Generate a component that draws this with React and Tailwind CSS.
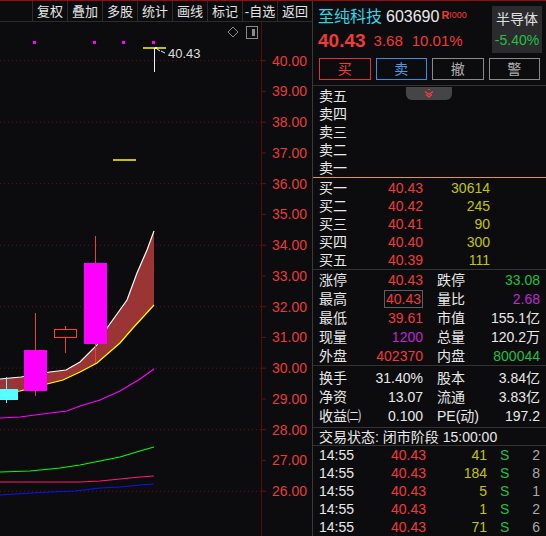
import React from "react";

const tools = ["复权", "叠加", "多股", "统计", "画线", "标记", "-自选", "返回"];

const axisPrices = [40, 39, 38, 37, 36, 35, 34, 33, 32, 31, 30, 29, 28, 27, 26];
const priceY = (p) => 60.7 + (40 - p) * 30.75;

const asks = ["卖五", "卖四", "卖三", "卖二", "卖一"];
const bids = [
  ["买一", "40.43", "30614"],
  ["买二", "40.42", "245"],
  ["买三", "40.41", "90"],
  ["买四", "40.40", "300"],
  ["买五", "40.39", "111"],
];

const stats1 = [
  ["涨停", "40.43", "text-[#f03a3a]", "跌停", "33.08", "text-[#1fc044]"],
  ["最高", "40.43", "text-[#f03a3a]", "量比", "2.68", "text-[#c026d3]"],
  ["最低", "39.61", "text-[#f03a3a]", "市值", "155.1亿", "text-[#e8e8e8]"],
  ["现量", "1200", "text-[#c026d3]", "总量", "120.2万", "text-[#e8e8e8]"],
  ["外盘", "402370", "text-[#f03a3a]", "内盘", "800044", "text-[#1fc044]"],
];

const stats2 = [
  ["换手", "31.40%", "股本", "3.84亿"],
  ["净资", "13.07", "流通", "3.83亿"],
  ["收益㈡", "0.100", "PE(动)", "197.2"],
];

const trades = [
  ["14:55", "40.43", "41", "2"],
  ["14:55", "40.43", "184", "8"],
  ["14:55", "40.43", "5", "1"],
  ["14:55", "40.43", "1", "2"],
  ["14:55", "40.43", "71", "6"],
];

const pts = (arr) => arr.map((p) => p.join(",")).join(" ");

const upper = [[0, 379], [21, 377], [50, 372], [66, 370], [80, 362], [97, 345], [107, 328], [127, 300], [137, 273], [147, 250], [154, 231]];
const lower = [[0, 394], [20, 391], [47, 384], [63, 380], [80, 372], [97, 363], [120, 343], [133, 328], [144, 316], [154, 305]];

function KChart() {
  return (
    <svg width="312" height="514" viewBox="0 22 312 514" className="block">
      {[40, 38, 36, 34, 32, 30, 28, 26].map((p) => (
        <line key={p} x1="0" x2="261" y1={priceY(p)} y2={priceY(p)} stroke="#6b1010" strokeDasharray="1 3" />
      ))}
      <line x1="261.5" x2="261.5" y1="22" y2="536" stroke="#5a0a0a" />
      {axisPrices.map((p) => (
        <g key={p}>
          <line x1="262" x2="266" y1={priceY(p)} y2={priceY(p)} stroke="#6b1010" />
          <text x="307" y={priceY(p) + 5} textAnchor="end" fontSize="14" fill="#e63c3c" fontFamily="Liberation Sans, sans-serif">
            {p.toFixed(2)}
          </text>
        </g>
      ))}

      {/* icons */}
      <path d="M233 27 L238 32 L233 37 L228 32 Z" fill="none" stroke="#8a8a8a" />
      <rect x="246.5" y="26.5" width="11" height="12" fill="none" stroke="#8a8a8a" />
      <rect x="252" y="29" width="3" height="7" fill="#8a8a8a" />

      {/* top markers */}
      {[34, 94, 123, 153].map((x) => (
        <rect key={x} x={x - 1} y="41" width="3" height="3" fill="#ff00ff" />
      ))}
      <line x1="143" x2="166" y1="48" y2="48" stroke="#ffff00" strokeWidth="1.5" />
      <line x1="154.5" x2="154.5" y1="48" y2="72" stroke="#f0f0f0" />
      <rect x="155" y="47" width="2" height="2" fill="#ffff60" />
      <path d="M157 49 L160 51 M161 51 L165 53" stroke="#f0f0f0" />
      <text x="168" y="58" fontSize="13" fill="#dcdcdc" fontFamily="Liberation Sans, sans-serif">40.43</text>
      <line x1="113" x2="136" y1="160" y2="160" stroke="#ffff00" strokeWidth="1.5" />

      {/* band */}
      <polygon points={pts([...upper, ...[...lower].reverse()])} fill="#9b3535" />
      <polyline points={pts(upper)} fill="none" stroke="#ffffff" strokeWidth="1.2" />
      <polyline points={pts(lower)} fill="none" stroke="#ffff00" strokeWidth="1.2" />

      {/* moving averages */}
      <polyline points={pts([[0, 418], [20, 417], [50, 413], [67, 411], [80, 406], [100, 400], [120, 391], [140, 379], [154, 369]])} fill="none" stroke="#ff00ff" strokeWidth="1.2" />
      <polyline points={pts([[0, 472], [30, 471], [60, 468], [80, 465], [100, 461], [120, 457], [140, 451], [154, 447]])} fill="none" stroke="#00ff00" strokeWidth="1.2" />
      <polyline points={pts([[0, 482], [80, 482], [100, 481], [120, 479], [140, 477], [154, 476]])} fill="none" stroke="#ff1a70" strokeWidth="1.2" />
      <polyline points={pts([[0, 495], [15, 494], [50, 492], [75, 491], [100, 488], [120, 487], [140, 485], [154, 484]])} fill="none" stroke="#1010ff" strokeWidth="1.2" />

      {/* candles */}
      <line x1="6.5" x2="6.5" y1="377" y2="403" stroke="#55ffff" />
      <rect x="0" y="389" width="18" height="11" fill="#55ffff" />
      <line x1="35.5" x2="35.5" y1="313" y2="396" stroke="#e84040" />
      <rect x="24" y="350" width="23" height="41" fill="#ff00ff" />
      <line x1="65.5" x2="65.5" y1="326" y2="353" stroke="#e84040" />
      <rect x="54.5" y="329.5" width="22" height="8" fill="#0c0c0e" stroke="#ff3a3a" />
      <line x1="95.5" x2="95.5" y1="236" y2="363" stroke="#e84040" />
      <rect x="84" y="263" width="23" height="81" fill="#ff00ff" />
    </svg>
  );
}

function Divider({ color = "border-[#333]" }) {
  return <div className={`border-b ${color}`} />;
}

export default function App() {
  return (
    <div className="w-[546px] h-[536px] overflow-hidden bg-[#0c0c0e] border-t border-[#9b0a0a] flex font-['Liberation_Sans','Noto_Sans_CJK_SC',sans-serif] text-[#e8e8e8]">
      {/* left: chart */}
      <div className="w-[312px] flex flex-col">
        <div className="h-[21px] flex justify-end border-b border-[#2c2c2c]">
          {tools.map((t) => (
            <div key={t} className="w-[35px] border-l border-[#2c2c2c] flex items-center justify-center text-[13px] text-[#e4e4e4] leading-none">
              {t}
            </div>
          ))}
        </div>
        <KChart />
      </div>

      {/* right: quote panel */}
      <div className="w-[234px] border-l border-[#3a3a3a] flex flex-col text-[14px] leading-none relative">
        <div className="pt-[5px] flex">
          <div className="flex-1 pl-[5px]">
            <div className="h-[22px] flex items-center">
              <span className="text-[16px] text-[#33d6e6]">至纯科技</span>
              <span className="text-[16px] text-[#eaeaea] ml-[4px]">603690</span>
              <span className="text-[11px] font-bold text-[#f03a3a] ml-[2px] -mt-[4px]">R</span>
              <span className="text-[9px] text-[#f03a3a] -mt-[4px]">I000</span>
            </div>
            <div className="h-[25px] flex items-center">
              <span className="text-[19px] font-bold text-[#f03a3a]">40.43</span>
              <span className="text-[15px] text-[#f03a3a] ml-[8px]">3.68</span>
              <span className="text-[15px] text-[#f03a3a] ml-[9px]">10.01%</span>
            </div>
          </div>
          <div className="w-[50px] h-[47px] mr-[4px] bg-[#2b2b2d] flex flex-col items-center justify-around py-[3px]">
            <span className="text-[14px] text-[#e0e0e0]">半导体</span>
            <span className="text-[14px] text-[#1fc044]">-5.40%</span>
          </div>
        </div>
        <div className="mt-[5px] mb-[5px] px-[6px] flex gap-[5px]">
          <div className="w-[52px] h-[22px] border border-[#e03434] text-[#f03a3a] flex items-center justify-center">买</div>
          <div className="w-[52px] h-[22px] border border-[#3a8ee0] text-[#4a9ae8] flex items-center justify-center">卖</div>
          <div className="w-[52px] h-[22px] border border-[#8a8a8a] text-[#b0b0b0] flex items-center justify-center">撤</div>
          <div className="w-[52px] h-[22px] border border-[#8a8a8a] text-[#b0b0b0] flex items-center justify-center">警</div>
        </div>
        <Divider />

        <div className="absolute left-[93px] top-[86px] w-[46px] h-[13px] bg-[#454547] rounded-b-[6px] flex items-center justify-center">
          <svg width="10" height="9" viewBox="0 0 10 9">
            <path d="M4 0.5 H6" stroke="#ff3a3a" />
            <path d="M1 2.5 L5 5.5 L9 2.5" fill="none" stroke="#ff3a3a" strokeWidth="1.3" />
            <path d="M2 5.5 L5 8 L8 5.5" fill="none" stroke="#ff3a3a" strokeWidth="1.3" />
          </svg>
        </div>

        <div className="px-[6px] pt-[1px]">
          {asks.map((a) => (
            <div key={a} className="h-[18px] flex items-center">{a}</div>
          ))}
        </div>
        <div className="border-b border-[#d89a3c]" />
        <div className="px-[6px] pt-[1px]">
          {bids.map(([l, p, v]) => (
            <div key={l} className="h-[18px] flex items-center">
              <span className="w-[40px]">{l}</span>
              <span className="w-[64px] text-right text-[#f03a3a]">{p}</span>
              <span className="w-[67px] text-right text-[#c4c400]">{v}</span>
            </div>
          ))}
        </div>
        <Divider />

        <div className="px-[6px]">
          {stats1.map(([l1, v1, c1, l2, v2, c2]) => (
            <div key={l1} className="h-[19px] flex items-center">
              <div className="w-[104px] flex justify-between items-center">
                <span>{l1}</span>
                {l1 === "最高" ? (
                  <span className={`border border-[#5e5e5e] h-[18px] px-[1px] flex items-center ${c1}`}>{v1}</span>
                ) : (
                  <span className={c1}>{v1}</span>
                )}
              </div>
              <div className="w-[103px] ml-[14px] flex justify-between">
                <span>{l2}</span>
                <span className={c2}>{v2}</span>
              </div>
            </div>
          ))}
        </div>
        <Divider />

        <div className="px-[6px] py-[2px]">
          {stats2.map(([l1, v1, l2, v2]) => (
            <div key={l1} className="h-[19px] flex items-center">
              <div className="w-[104px] flex justify-between">
                <span>{l1}</span>
                <span>{v1}</span>
              </div>
              <div className="w-[103px] ml-[14px] flex justify-between">
                <span>{l2}</span>
                <span>{v2}</span>
              </div>
            </div>
          ))}
        </div>
        <Divider />

        <div className="h-[21px] px-[6px] flex items-center">交易状态: 闭市阶段 15:00:00</div>
        <Divider />

        <div className="px-[6px]">
          {trades.map(([t, p, v, n], i) => (
            <div key={i} className="h-[18px] flex items-center">
              <span className="w-[40px]">{t}</span>
              <span className="w-[67px] text-right text-[#f03a3a]">{p}</span>
              <span className="w-[61px] text-right text-[#c4c400]">{v}</span>
              <span className="ml-[13px] w-[10px] text-[#1fc044]">S</span>
              <span className="w-[30px] text-right text-[#a8a8a8]">{n}</span>
            </div>
          ))}
        </div>
      </div>
    </div>
  );
}
